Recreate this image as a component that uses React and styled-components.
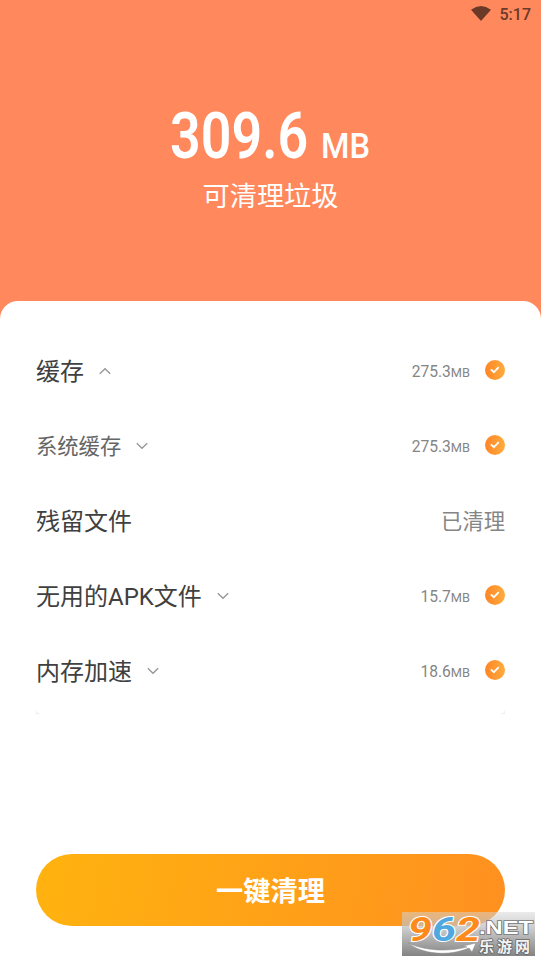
import React from 'react';
import styled, { createGlobalStyle } from 'styled-components';

const items = [
  { name: '缓存', size: '275.3', arrow: 'up' },
  { name: '系统缓存', size: '275.3', arrow: 'down', sub: true },
  { name: '残留文件', done: true },
  { name: '无用的APK文件', size: '15.7', arrow: 'down' },
  { name: '内存加速', size: '18.6', arrow: 'down' },
];

const Chevron = ({ up }) => (
  <ChevronIcon viewBox="0 0 12 8">
    <path d={up ? 'M0.8 6.7L6 1.7L11.2 6.7' : 'M0.8 1.3L6 6.3L11.2 1.3'} />
  </ChevronIcon>
);

const Check = () => (
  <CheckBadge>
    <svg width="20" height="20" viewBox="0 0 20 20">
      <path d="M5.9 9.3L8.9 12.2L13.7 7.2" />
    </svg>
  </CheckBadge>
);

const JunkRow = ({ item }) => (
  <Row>
    <Name $sub={item.sub}>{item.name}</Name>
    {item.arrow ? <Chevron up={item.arrow === 'up'} /> : null}
    <Spacer />
    {item.done ? (
      <Done>已清理</Done>
    ) : (
      <>
        <Size>
          {item.size}
          <Unit>MB</Unit>
        </Size>
        <Check />
      </>
    )}
  </Row>
);

const SiteMark = () => (
  <MarkBox>
    <svg width="134" height="52" viewBox="0 -8 134 52">
      <MarkDigits>
        <text x="6" y="28.5" textLength="24" lengthAdjust="spacingAndGlyphs" fill="#ff8a1c">9</text>
        <text x="30" y="28.5" textLength="24" lengthAdjust="spacingAndGlyphs" fill="#4fa8e0">6</text>
        <text x="54" y="28.5" textLength="24" lengthAdjust="spacingAndGlyphs" fill="#ff8a1c">2</text>
      </MarkDigits>
      <MarkNet x="77" y="22" textLength="54" lengthAdjust="spacingAndGlyphs">.NET</MarkNet>
      <MarkName x="77" y="39.5" textLength="51">乐游网</MarkName>
      <path
        d="M6 31C20 42 46 45 67 36L70 40L74 31L61 34L65 35C46 40 23 39 6 31Z"
        fill="#fff"
        stroke="#888"
        strokeWidth="0.5"
      />
    </svg>
  </MarkBox>
);

export default function App() {
  return (
    <Screen>
      <GlobalStyle />
      <StatusBar>
        <svg width="20" height="15" viewBox="0 0 20 15">
          <path d="M0 3.7Q10 -3.5 20 3.7L10 15Z" fill="#6a3928" />
        </svg>
        <Clock>5:17</Clock>
      </StatusBar>
      <Summary>
        <Total>
          <Amount>309.6</Amount>
          <AmountUnit>MB</AmountUnit>
        </Total>
        <Caption>可清理垃圾</Caption>
      </Summary>
      <Sheet>
        <List>
          {items.map((item) => (
            <JunkRow key={item.name} item={item} />
          ))}
          <ListEnd>
            <ListEndInner />
          </ListEnd>
        </List>
        <CleanButton>一键清理</CleanButton>
      </Sheet>
      <Footer />
      <SiteMark />
    </Screen>
  );
}

const GlobalStyle = createGlobalStyle`
  body {
    margin: 0;
    background: #fff;
    font-family: Roboto, 'Noto Sans CJK SC', sans-serif;
  }
`;

const Screen = styled.div`
  position: relative;
  display: flex;
  flex-direction: column;
  height: 962px;
  overflow: hidden;
  background: #ff885c;
`;

const StatusBar = styled.div`
  display: flex;
  justify-content: flex-end;
  align-items: flex-start;
  gap: 9px;
  height: 28px;
  padding: 6px 10px 0 0;
  box-sizing: border-box;
`;

const Clock = styled.span`
  font-size: 16px;
  font-weight: 500;
  line-height: 18px;
  color: #6a3928;
`;

const Summary = styled.div`
  height: 273px;
  padding-top: 71px;
  box-sizing: border-box;
  color: #fff;
`;

const Total = styled.div`
  display: flex;
  align-items: baseline;
  height: 78px;
  padding-left: 170px;
  line-height: 76px;
`;

const Amount = styled.span`
  width: 151px;
  font-size: 64px;
  font-weight: 600;
  transform: scaleX(0.84);
  transform-origin: left;
`;

const AmountUnit = styled.span`
  font-size: 35px;
  font-weight: 500;
  transform: scaleX(0.93);
  transform-origin: left;
`;

const Caption = styled.div`
  height: 40px;
  line-height: 40px;
  font-size: 27.2px;
  text-align: center;
`;

const Sheet = styled.div`
  display: flex;
  flex: 1;
  flex-direction: column;
  padding: 33px 36px 0;
  border-radius: 18px 18px 0 0;
  background: #fff;
`;

const List = styled.div`
  height: 520px;
`;

const Row = styled.div`
  display: flex;
  align-items: center;
  height: 75px;
`;

const Name = styled.span`
  margin-top: -4px;
  font-size: ${(props) => (props.$sub ? '21.3px' : '24px')};
  color: ${(props) => (props.$sub ? '#666' : '#404040')};
`;

const ChevronIcon = styled.svg`
  width: 12px;
  height: 8px;
  margin: -2px 0 0 15px;
  fill: none;
  stroke: #969696;
  stroke-width: 1.3;
`;

const Spacer = styled.div`
  flex: 1;
`;

const Size = styled.span`
  font-size: 15.6px;
  color: #858585;
`;

const Unit = styled.span`
  font-size: 12.8px;
`;

const Done = styled.span`
  margin-top: -4px;
  font-size: 21.3px;
  color: #858585;
`;

const CheckBadge = styled.span`
  width: 20px;
  height: 20px;
  margin: -3px 0 0 15px;
  border-radius: 50%;
  background: linear-gradient(90deg, #ff8526, #ffac3e);

  svg {
    display: block;
    fill: none;
    stroke: #fff;
    stroke-width: 1.8;
  }
`;

const ListEnd = styled.div`
  height: 5px;
  background: #f0f0f0;
`;

const ListEndInner = styled.div`
  height: 5px;
  border-radius: 0 0 5px 5px;
  background: #fff;
`;

const CleanButton = styled.button`
  height: 72px;
  padding: 0 0 2px;
  border: none;
  border-radius: 36px;
  background: linear-gradient(100deg, #ffb30f, #ff9020);
  color: #fff;
  font-family: inherit;
  font-size: 27.2px;
  font-weight: 700;
  cursor: pointer;
`;

const Footer = styled.div`
  height: 6px;
  background: #fff;
`;

const MarkBox = styled.div`
  position: absolute;
  left: 402px;
  top: 912px;
  width: 133px;
  height: 44px;
  background: linear-gradient(rgba(215, 215, 215, 0.5), rgba(190, 190, 190, 0.75) 35%, rgba(125, 125, 125, 0.95));

  svg {
    display: block;
    margin-top: -8px;
  }
`;

const MarkDigits = styled.g`
  font-family: Roboto, sans-serif;
  font-size: 33px;
  font-weight: 700;
  font-style: italic;
  stroke: #fff;
  stroke-width: 2px;
  paint-order: stroke;
`;

const MarkNet = styled.text`
  font-family: 'Liberation Sans', sans-serif;
  font-size: 18px;
  font-weight: 700;
  fill: #fff;
  stroke: #777;
  stroke-width: 1.5px;
  paint-order: stroke;
`;

const MarkName = styled.text`
  font-size: 15px;
  font-weight: 700;
  fill: #f4f4f4;
  stroke: #666;
  stroke-width: 1.5px;
  paint-order: stroke;
`;
